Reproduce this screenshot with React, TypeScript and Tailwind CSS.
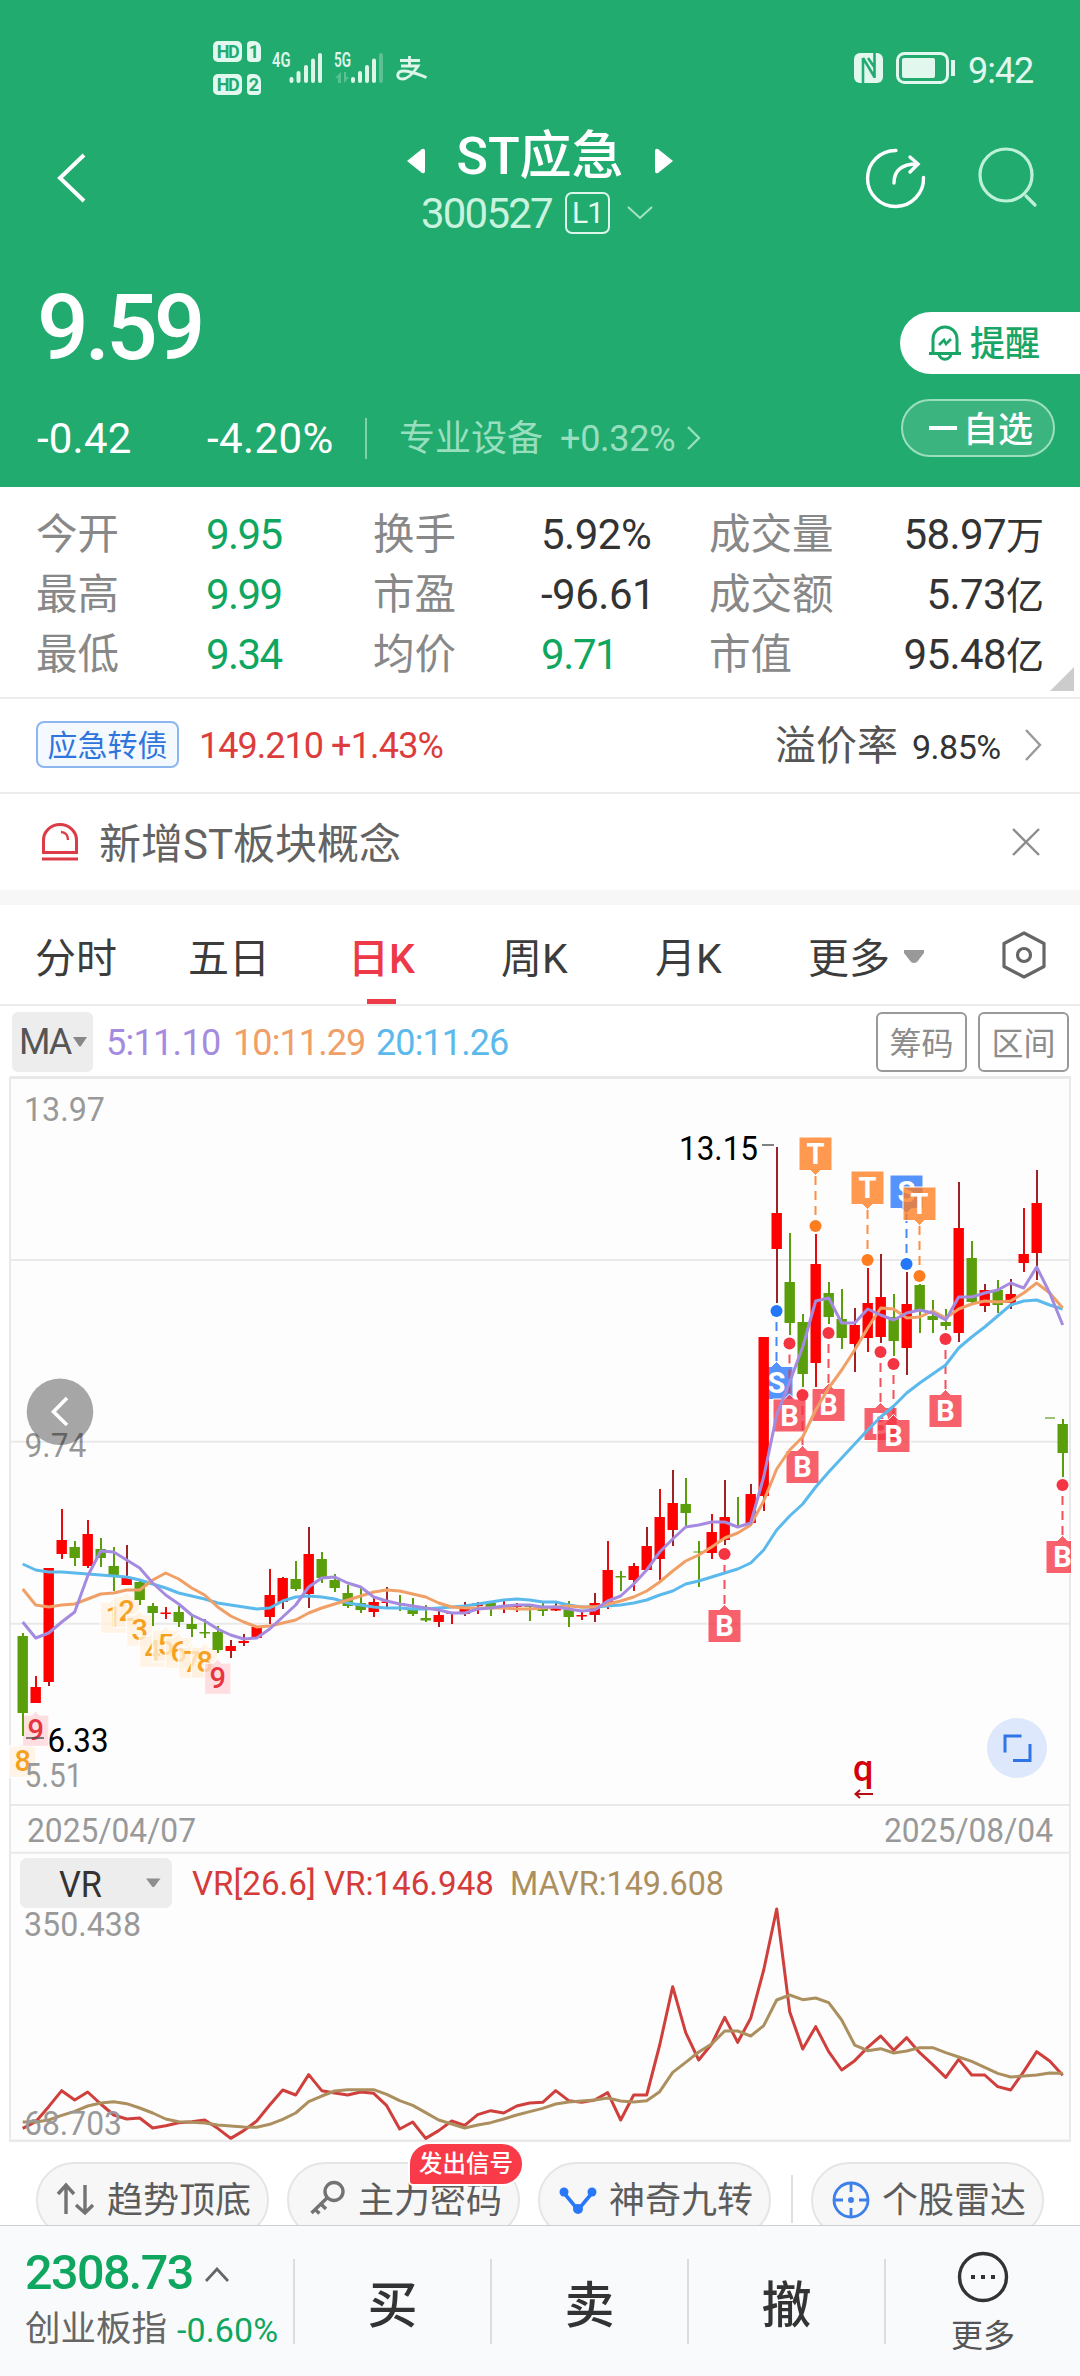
import type { ReactNode } from 'react';

type Candle = [number, number, number, number, string];

// high, body top, body bottom, low, kind (r = up, d = up with dark wick, g = down)
const candles: Candle[] = [
    [1633, 1636, 1713, 1736, 'g'], [1676, 1687, 1703, 1703, 'r'], [1568, 1568, 1682, 1686, 'd'], [1509, 1540, 1554, 1559, 'r'],
    [1541, 1547, 1558, 1566, 'g'], [1520, 1534, 1566, 1568, 'r'], [1538, 1549, 1558, 1567, 'g'], [1547, 1566, 1576, 1591, 'g'],
    [1545, 1578, 1585, 1585, 'd'], [1580, 1582, 1600, 1605, 'g'], [1603, 1606, 1613, 1626, 'g'], [1607, 1612.5, 1614, 1619, 'r'],
    [1606, 1612, 1622, 1627, 'g'], [1616, 1624, 1629, 1637, 'g'], [1619, 1632, 1633.5, 1638, 'g'], [1626, 1632, 1650, 1653, 'g'],
    [1640, 1646, 1651, 1658, 'd'], [1634, 1641, 1643, 1646, 'd'], [1627, 1627, 1638, 1638, 'r'], [1569, 1595, 1617, 1624, 'r'],
    [1577, 1578, 1602, 1609, 'd'], [1561, 1579, 1589, 1591, 'g'], [1527, 1554, 1594, 1608, 'd'], [1552, 1559, 1578, 1583, 'g'],
    [1574, 1580, 1588, 1592, 'g'], [1585, 1593, 1606, 1608, 'g'], [1587, 1603, 1610, 1613, 'g'], [1598, 1602, 1612, 1617, 'r'],
    [1587, 1601.5, 1603, 1609, 'd'], [1595, 1603, 1604, 1611, 'g'], [1598, 1608, 1614, 1616, 'g'], [1605, 1618, 1620.5, 1622, 'g'],
    [1610, 1615, 1622, 1627, 'd'], [1613, 1613, 1614, 1624, 'r'], [1602, 1608, 1614, 1616, 'd'], [1602, 1603, 1606, 1614, 'r'],
    [1601, 1603, 1608, 1616, 'g'], [1601, 1607, 1608, 1613, 'r'], [1603, 1606, 1607, 1612, 'r'], [1604, 1606, 1607, 1621, 'g'],
    [1603, 1609, 1611, 1616, 'g'], [1603, 1608, 1610.5, 1611, 'd'], [1601, 1610, 1617, 1627, 'g'], [1610, 1615, 1616.5, 1620, 'r'],
    [1593, 1603, 1615, 1622, 'd'], [1541, 1570, 1603, 1609, 'r'], [1571, 1576, 1577.5, 1591, 'g'], [1563, 1566, 1580, 1591, 'r'],
    [1527, 1546, 1570, 1571, 'd'], [1489, 1517, 1559, 1580, 'r'], [1470, 1503, 1530, 1546, 'd'], [1478, 1504, 1513, 1526, 'g'],
    [1541, 1551.5, 1552.5, 1587, 'g'], [1514, 1532, 1553, 1559, 'r'], [1480, 1517, 1540, 1545, 'd'], [1497, 1526, 1527, 1527, 'g'],
    [1484, 1494, 1523, 1523, 'd'], [1337, 1337, 1496, 1511, 'r'], [1147, 1213, 1249, 1303, 'd'], [1233, 1282, 1323, 1335, 'g'],
    [1314, 1322, 1374, 1387, 'g'], [1234, 1264, 1363, 1387, 'r'], [1282, 1293, 1317, 1324, 'g'], [1289, 1319, 1338, 1349, 'g'],
    [1308, 1325, 1344, 1372, 'd'], [1268, 1303, 1338, 1352, 'r'], [1254, 1297, 1337, 1343, 'd'], [1294, 1317, 1341, 1356, 'g'],
    [1272, 1304, 1348, 1375, 'd'], [1284, 1285, 1310, 1333, 'g'], [1300, 1316, 1320, 1333, 'g'], [1309, 1322, 1326, 1330, 'g'],
    [1182, 1228, 1333, 1342, 'd'], [1241, 1258, 1302, 1303, 'g'], [1284, 1290, 1306, 1312, 'd'], [1280, 1290, 1305, 1313, 'g'],
    [1279, 1294, 1303, 1309, 'd'], [1208, 1254, 1263, 1272, 'r'], [1170, 1203, 1253, 1280, 'd'], [1418, 1418, 1418, 1418, 'n'],
    [1419, 1424, 1453, 1477, 'g'],
];

const ma5 = [1622, 1638, 1633, 1622, 1612, 1576, 1551, 1552, 1560, 1568, 1583, 1595, 1604, 1615, 1621, 1629, 1635, 1639, 1638, 1629, 1617, 1605, 1587, 1578, 1577, 1583, 1587, 1597, 1601, 1604, 1606, 1608, 1610, 1613, 1613, 1609, 1608, 1606, 1605, 1605, 1607, 1607, 1609, 1611, 1610, 1601, 1596, 1584, 1570, 1552, 1539, 1527, 1525, 1522, 1522, 1527, 1523, 1477, 1415, 1382, 1347, 1301, 1298, 1323, 1323, 1309, 1315, 1320, 1313, 1310, 1313, 1320, 1297, 1297, 1293, 1290, 1283, 1288, 1267, 1293, 1325];
const ma10 = [1589, 1605, 1607, 1605, 1604, 1599, 1594, 1593, 1590, 1590, 1580, 1573, 1579, 1588, 1595, 1607, 1616, 1622, 1627, 1626, 1623, 1620, 1613, 1608, 1604, 1600, 1596, 1592, 1590, 1591, 1594, 1597, 1603, 1607, 1608, 1608, 1608, 1608, 1609, 1609, 1608, 1607, 1606, 1607, 1607, 1604, 1601, 1597, 1591, 1582, 1571, 1561, 1555, 1547, 1538, 1533, 1525, 1501, 1469, 1450, 1437, 1410, 1388, 1370, 1350, 1328, 1308, 1309, 1318, 1317, 1311, 1318, 1309, 1304, 1301, 1302, 1301, 1293, 1283, 1293, 1308];
const ma20 = [1564, 1570, 1572, 1572, 1573, 1574, 1575, 1576, 1577, 1580, 1584, 1588, 1593, 1596, 1599, 1603, 1605, 1607, 1609, 1608, 1601, 1597, 1596, 1597, 1599, 1603, 1605, 1607, 1608, 1608, 1609, 1609, 1608, 1607, 1606, 1604, 1602, 1600, 1599, 1600, 1602, 1602, 1605, 1607, 1607, 1606, 1605, 1603, 1600, 1595, 1591, 1584, 1581, 1577, 1573, 1569, 1563, 1550, 1530, 1516, 1504, 1487, 1472, 1458, 1444, 1430, 1417, 1406, 1393, 1383, 1374, 1365, 1348, 1337, 1327, 1316, 1305, 1301, 1300, 1305, 1309];

const vr = [985, 965, 920, 872, 900, 876, 912, 945, 957, 954, 984, 977, 968, 965, 960, 985, 1015, 992, 963, 915, 870, 885, 824, 872, 879, 885, 876, 880, 917, 987, 966, 1015, 992, 963, 976, 944, 932, 939, 918, 909, 907, 872, 902, 907, 900, 878, 960, 885, 885, 735, 560, 698, 780, 732, 652, 727, 655, 510, 327, 635, 747, 680, 755, 810, 782, 742, 708, 751, 713, 758, 794, 832, 778, 825, 825, 860, 870, 815, 755, 783, 826];
const mavr = [966, 966, 960, 946, 934, 918, 909, 905, 911, 924, 939, 957, 965, 967, 969, 975, 978, 981, 982, 973, 958, 939, 905, 888, 873, 869, 869, 869, 883, 902, 916, 938, 960, 972, 984, 975, 968, 957, 945, 935, 925, 912, 906, 903, 900, 894, 903, 906, 902, 875, 817, 787, 756, 732, 693, 693, 708, 677, 600, 585, 599, 594, 608, 660, 735, 752, 746, 759, 753, 743, 743, 758, 771, 784, 802, 820, 831, 828, 825, 819, 820];

// letter, candle index, dot y, direction of the flag
const flags: [string, number, number, 'up' | 'down'][] = [
    ['S', 58, 1311, 'up'], ['B', 59, 1343.5, 'up'], ['B', 60, 1395, 'up'], ['B', 62, 1333, 'up'],
    ['B', 66, 1352, 'up'], ['B', 67, 1364, 'up'], ['B', 71, 1339, 'up'], ['B', 54, 1554, 'up'],
    ['B', 80, 1485, 'up'], ['T', 61, 1226, 'down'], ['T', 65, 1260, 'down'], ['S', 68, 1264, 'down'],
    ['T', 69, 1276, 'down'],
];

// nine-turn counters: label, candle index, box top
const turns: [string, number, number][] = [
    ['1', 7, 1602], ['2', 8, 1596], ['3', 9, 1615], ['4', 10, 1636], ['5', 11, 1630], ['6', 12, 1637],
    ['7', 13, 1647], ['8', 14, 1647], ['9', 15, 1663], ['8', 0, 1746], ['9', 1, 1715],
];

const flagColors: Record<string, string> = { S: '#2476fb', B: '#f43442', T: '#ff7c1f' };

const cx = (i: number) => 22.7 + i * 13;
const line = (ys: number[]) => ys.map((y, i) => `${cx(i)},${y}`).join(' ');

const Label = ({ x, y, w, children, fill = '#999', size = 34 }: { x: number; y: number; w: number; children: string; fill?: string; size?: number }) => (
    <text x={x} y={y} fontSize={size} fill={fill} textLength={w} lengthAdjust="spacingAndGlyphs">{children}</text>
);

const Flag = ({ kind, i, dot, dir }: { kind: string; i: number; dot: number; dir: 'up' | 'down' }) => {
    const x = cx(i) - 0.2;
    const top = dir === 'up' ? dot + 55.5 : dot - 89;
    const color = flagColors[kind];
    const tip = dir === 'up'
        ? `M${x - 16.5} ${top}h11.5l5-5 5 5h11.5v33h-33z`
        : `M${x - 16.5} ${top}h33v33.5h-11.5l-5 5-5-5h-11.5z`;
    return (
        <g>
            <path d={dir === 'up' ? `M${x} ${dot + 11}V${top - 5}` : `M${x} ${dot - 11}V${top + 39}`} stroke={color} strokeWidth="2" strokeDasharray="9 6" opacity="0.85" />
            <path d={tip} fill={color} fillOpacity="0.78" stroke="#fff" strokeWidth="1" />
            <text x={x} y={top + 26.5} fontSize="29" fontWeight="700" fill="#fff" textAnchor="middle">{kind}</text>
            <circle cx={x} cy={dot} r="6" fill={color} />
        </g>
    );
};

const KChart = () => (
    <svg width="1080" height="1066" viewBox="0 1076 1080 1066" className="block">
        <rect x="10" y="1076" width="1061" height="1067" fill="#fdfdfd" />
        <g stroke="#e9e9e9" strokeWidth="2" fill="none">
            <path d="M10 1077.5H1071" strokeWidth="3" />
            <path d="M10 1260H1070M10 1441.7H1070M10 1623.7H1070M10 1805H1070M10 1852.7H1070" />
            <path d="M10 1077V2142M1070 1077V2142" />
            <path d="M9 2141H1071" strokeWidth="3" />
        </g>
        <circle cx="60" cy="1411.7" r="33.3" fill="#a6a6a6" />
        <path d="M67 1398L53.5 1411.7 67 1425" fill="none" stroke="#fff" strokeWidth="3.6" />

        <g clipPath="url(#plot)">
            {flags.map(([kind, i, dot, dir]) => (
                <Flag key={`${kind}${i}`} kind={kind} i={i} dot={dot} dir={dir} />
            ))}
        </g>
        <clipPath id="plot"><rect x="10" y="1077" width="1061" height="728" /></clipPath>

        {turns.map(([n, i, top]) => (
            <g key={`${n}-${i}`}>
                <path d={`M${cx(i) - 13.3} ${top}h9.3l4-4.5 4 4.5h9.3v31.5h-26.6z`} fill={n === '9' ? '#ffd3d8' : '#fff0dd'} fillOpacity="0.75" stroke="#fff" strokeOpacity="0.8" strokeWidth="1.5" />
                <text x={cx(i)} y={top + 24.5} fontSize="29" fontWeight="500" fill={n === '9' ? '#e8343f' : '#f5a020'} textAnchor="middle">{n}</text>
            </g>
        ))}

        {candles.map(([hi, top, bottom, lo, kind], i) => {
            if (kind === 'n') return <path key={i} d="M1045 1418h10" stroke="#9cc478" strokeWidth="2" />;
            const body = kind === 'g' ? '#5a9e0c' : '#fe0000';
            const wick = kind === 'g' ? '#5a9e0c' : kind === 'd' ? '#9c2426' : '#e30b0d';
            return (
                <g key={i}>
                    <rect x={cx(i) - 0.7} y={hi} width="2" height={lo - hi} fill={wick} />
                    <rect x={cx(i) - 5.2} y={top} width="10.4" height={Math.max(bottom - top, 1)} fill={body} />
                </g>
            );
        })}

        <g fill="none" strokeWidth="3" strokeLinejoin="round">
            <polyline points={line(ma20)} stroke="#5bb9ec" />
            <polyline points={line(ma10)} stroke="#f0a066" />
            <polyline points={line(ma5)} stroke="#a58be0" />
            <polyline points={line(vr.map((v) => 1800 + v / 3))} stroke="#cf3f3c" />
            <polyline points={line(mavr.map((v) => 1800 + v / 3))} stroke="#ac8f5e" />
        </g>

        <Label x={24} y={1121} w={81}>13.97</Label>
        <Label x={24.5} y={1457} w={62} fill="#0000006a">9.74</Label>
        <Label x={24.5} y={1787} w={58}>5.51</Label>
        <Label x={47.5} y={1752} w={61} fill="#000">6.33</Label>
        <Label x={679} y={1159.5} w={79} fill="#000">13.15</Label>
        <path d="M26 1738h18M762 1145h12" stroke="#555" strokeWidth="1.6" />

        <text x="853" y="1781" fontSize="36" fontWeight="500" fill="#d4000c">q</text>
        <path d="M873 1794h-17m4-4l-4.5 4 4.5 4" fill="none" stroke="#b80d10" strokeWidth="2" />

        <circle cx="1017" cy="1748" r="30" fill="#dee8fc" />
        <path d="M1005 1752.500V1736h16.500M1030 1744v16.500h-17" fill="none" stroke="#2f75e8" strokeWidth="3" />

        <Label x={27} y={1842} w={169}>2025/04/07</Label>
        <Label x={884} y={1842} w={169}>2025/08/04</Label>
        <rect x="20" y="1858" width="152" height="50" rx="7" fill="#ededed" />
        <Label x={59} y={1897} w={43} fill="#333" size={36}>VR</Label>
        <path d="M146 1878.500h14.500l-6 8q-1.200 1-2.400 0z" fill="#8e8e8e" />
        <Label x={192} y={1895} w={302} fill="#d43b3a" size={33}>VR[26.6] VR:146.948</Label>
        <Label x={510} y={1895} w={214} fill="#ac8f5e" size={33}>MAVR:149.608</Label>
        <Label x={24} y={1936} w={117}>350.438</Label>
        <Label x={24} y={2135} w={98}>68.703</Label>
    </svg>
);

const StatusBar = () => (
    <div className="flex h-[110px] pt-[41px] pl-[213px]">
        <div className="flex flex-col gap-[12px]">
            {['1', '2'].map((n) => (
                <div key={n} className="flex gap-[5px] text-[18px] leading-[21px] font-bold text-[#22ab6f]">
                    <span className="h-[21px] w-[29px] rounded-[5px] bg-[#e2f8ee] text-center tracking-[-1.5px]">HD</span>
                    <span className="h-[21px] w-[14px] rounded-[4px] rounded-tr-[7px] bg-[#e2f8ee] text-center">{n}</span>
                </div>
            ))}
        </div>
        <svg width="170" height="46" viewBox="261 48 170 46" className="mt-[7px]" fill="#def5ea">
            <text x="272" y="67" fontSize="20" fontWeight="600" textLength="18.500" lengthAdjust="spacingAndGlyphs">4G</text>
            <text x="334" y="67" fontSize="20" fontWeight="600" textLength="17" lengthAdjust="spacingAndGlyphs">5G</text>
            <g strokeWidth="4" strokeLinecap="round" stroke="#def5ea">
                <path d="M291.500 79v2M298.500 73v8M306 67v14M313 60.500v20.500M320 55v26M353 79v2M360 73v8M367 67v14M374 60.500v20.500" />
                <path d="M381 55v26" opacity="0.3" />
            </g>
            <path d="M338 72v11h3v-11l-6 6h3zM344 72v11l5-6h-3v-5z" opacity="0.3" />
            <path d="M400 60.500h20M409.500 56v9.500M401 66h17c-4 6-9 13-15.500 13-7 0-6-8 1-8 8 0 14 3 23 6.500" fill="none" stroke="#def5ea" strokeWidth="2.800" />
        </svg>
        <svg width="104" height="46" viewBox="852 48 104 46" className="mt-[7px] ml-[421px]" fill="none" stroke="#e2f8ee">
            <rect x="854" y="53" width="29" height="30" rx="6" fill="#e2f8ee" stroke="none" />
            <path d="M863 83V58M863 58l11.500 19M874.500 78V53M868 58l7 10" stroke="#22ab6f" strokeWidth="2.600" />
            <rect x="897.500" y="53.500" width="50" height="29" rx="7" strokeWidth="3" />
            <rect x="902" y="58" width="33" height="20" rx="2" fill="#e2f8ee" stroke="none" />
            <path d="M953 60v16" strokeWidth="4" />
        </svg>
        <span className="mt-[12px] ml-[12px] text-[36px] leading-[36px] tracking-[-1.1px] text-[#e2f8ee]">9:42</span>
    </div>
);

const TitleBar = () => (
    <div className="flex h-[150px] items-start text-white">
        <svg width="40" height="60" viewBox="50 148 40 60" className="mt-[38px] ml-[50px]" fill="none" stroke="#fff" strokeWidth="4">
            <path d="M84 155L60 178l24 23" />
        </svg>
        <div className="ml-[317px] flex w-[266px] flex-col">
            <div className="mt-[17px] flex h-[56px] items-center justify-between">
                <svg width="18" height="26" viewBox="0 0 18 26" className="mt-[12px]" fill="#fff"><path d="M0 13L15 1q3-1 3 2v20q0 3-3 2z" /></svg>
                <span className="pt-[3px] text-[52px] leading-none font-medium">ST应急</span>
                <svg width="18" height="26" viewBox="0 0 18 26" className="mt-[12px]" fill="#fff"><path d="M18 13L3 1Q0 0 0 3v20q0 3 3 2z" /></svg>
            </div>
            <div className="flex h-[60px] items-center pl-[14px] text-[#c9f2df]">
                <span className="w-[133px] pt-[2px] text-[42px] leading-none tracking-[-1.8px]">300527</span>
                <span className="ml-[11px] flex h-[42px] w-[45px] items-center justify-center rounded-[7px] border-2 border-[#dcf7ea] text-[30px] leading-none tracking-[-1px] text-[#e6faf1]">L1</span>
                <svg width="26" height="16" viewBox="0 0 26 16" className="ml-[17px]" fill="none" stroke="#a5e3c7" strokeWidth="2"><path d="M1 2l12 11L25 2" /></svg>
            </div>
        </div>
        <svg width="190" height="70" viewBox="850 140 190 70" className="mt-[30px] ml-[178px]" fill="none">
            <path d="M895 150.500a28 28 0 1 0 27.500 27" stroke="#fff" strokeWidth="3.400" strokeLinecap="round" />
            <path d="M893 183c0-11 6-19 23-19M909 157l8 7-8 8" stroke="#fff" strokeWidth="3.400" strokeLinecap="round" />
            <circle cx="1005" cy="175" r="26" stroke="#bdf0d9" strokeWidth="3.200" />
            <path d="M1025 196l9 9" stroke="#bdf0d9" strokeWidth="3.200" strokeLinecap="round" />
        </svg>
    </div>
);

const PricePanel = () => (
    <div className="flex h-[227px] justify-between text-white">
        <div className="pl-[37px]">
            <div className="mt-[22px] h-[92px] text-[91px] leading-[92px] font-medium tracking-[-4px]">9.59</div>
            <div className="mt-[42px] flex h-[44px] items-center leading-none">
                <span className="w-[170px] pt-[2px] text-[42px] tracking-[0.2px]">-0.42</span>
                <span className="w-[158px] pt-[2px] text-[42px] tracking-[0.4px]">-4.20%</span>
                <span className="h-[41px] w-[2px] bg-[#7fd0ab]" />
                <span className="ml-[32px] pt-[2px] text-[36px] text-[#97dfbf]">专业设备</span>
                <span className="ml-[17px] w-[118px] pt-[2px] text-[36px] tracking-[-0.3px] text-[#97dfbf]">+0.32%</span>
                <svg width="16" height="26" viewBox="0 0 16 26" className="ml-[8px]" fill="none" stroke="#97dfbf" strokeWidth="2.400"><path d="M2 2l11 11L2 24" /></svg>
            </div>
        </div>
        <div className="w-[180px]">
            <div className="mt-[52px] flex h-[62px] items-center rounded-l-full bg-white pl-[28px] text-[#19a566]">
                <svg width="34" height="36" viewBox="0 0 34 36" fill="none" stroke="#19a566" strokeWidth="3">
                    <path d="M5 28V14a12 12 0 0 1 24 0v14M1 28.500h32M11 29c1 7 11 7 12 0" />
                    <path d="M11 20l5-5 2 4 5-5" strokeWidth="2.600" />
                </svg>
                <span className="ml-[8px] pt-[3px] text-[35px] leading-none font-medium">提醒</span>
            </div>
            <div className="mt-[25px] ml-px flex h-[58px] w-[154px] items-center rounded-full border-2 border-[#9adfc0] bg-[#3bb47f] pl-[26px]">
                <span className="h-[4px] w-[28px] bg-white" />
                <span className="ml-[6px] pt-[4px] text-[35px] leading-none font-medium">自选</span>
            </div>
        </div>
    </div>
);

const stats: [string, string, string, string, string, string, string][] = [
    ['今开', '9.95', '换手', '5.92%', '成交量', '58.97', '万'],
    ['最高', '9.99', '市盈', '-96.61', '成交额', '5.73', '亿'],
    ['最低', '9.34', '均价', '9.71', '市值', '95.48', '亿'],
];

const Stats = () => (
    <div className="relative h-[212px] border-b-2 border-[#ececec] pt-[18px] pr-[36px] pl-[36px]">
        {stats.map(([a, av, b, bv, c, cv, unit]) => (
            <div key={a} className="grid h-[60px] grid-cols-[170px_167px_168px_168px_140px_1fr] items-center text-[41.5px] leading-none text-[#888]">
                <span>{a}</span>
                <span className="text-[42px] tracking-[-1.6px] text-[#0fa75f]">{av}</span>
                <span>{b}</span>
                <span className={`text-[42px] ${b === '均价' ? 'tracking-[-1.4px] text-[#0fa75f]' : 'tracking-[-0.5px] text-[#333]'}`}>{bv}</span>
                <span>{c}</span>
                <span className="text-right whitespace-nowrap text-[#333]"><span className="text-[42px] tracking-[-0.6px]">{cv}</span><span className="text-[38px]">{unit}</span></span>
            </div>
        ))}
        <svg width="24" height="24" viewBox="0 0 24 24" className="absolute right-[6px] bottom-[6px]" fill="#ccc"><path d="M24 0v24H0z" /></svg>
    </div>
);

const BondRow = () => (
    <div className="flex h-[95px] items-center border-b-2 border-[#ececec] pt-px pl-[36px] leading-none">
        <span className="mb-[3px] flex h-[47px] w-[143px] items-center justify-center rounded-[8px] border-2 border-[#8db6f1] bg-[#f3f9ff] pt-[2px] text-[30px] text-[#2f75dc]">应急转债</span>
        <span className="ml-[20px] w-[132px] text-[36px] tracking-[-1px] text-[#dc3c3c]">149.210</span>
        <span className="text-[36px] tracking-[-0.8px] text-[#dc3c3c]">+1.43%</span>
        <span className="ml-auto text-[41px] text-[#555]">溢价率</span>
        <span className="ml-[14px] w-[90px] pt-px text-[34px] tracking-[-0.5px] text-[#333]">9.85%</span>
        <svg width="18" height="32" viewBox="0 0 18 32" className="mr-[38px] mb-[2px] ml-[22px]" fill="none" stroke="#999" strokeWidth="2.400"><path d="M2 1l14 15L2 31" /></svg>
    </div>
);

const NoticeRow = () => (
    <div className="flex h-[96px] items-center pl-[41px]">
        <svg width="38" height="38" viewBox="0 0 38 38" fill="none" stroke="#dc3c48" strokeWidth="3">
            <path d="M2.500 29.500V17a16.500 15.500 0 0 1 33 0v12.500zM1 36h36" />
            <path d="M20 9c4 0 7 3 7 8" strokeWidth="2.400" />
        </svg>
        <span className="ml-[20px] pt-[5px] text-[42px] leading-none text-[#636363]">新增ST板块概念</span>
        <svg width="28" height="28" viewBox="0 0 28 28" className="mr-[40px] ml-auto" fill="none" stroke="#8d8d8d" strokeWidth="2.400"><path d="M1 1l26 26M27 1L1 27" /></svg>
    </div>
);

const tabs: [string, string][] = [['分时', 'w-[153px]'], ['五日', 'w-[160px]'], ['日K', 'w-[153px]'], ['周K', 'w-[154px]'], ['月K', 'w-[153px]'], ['更多', 'w-[95px]']];

const Tabs = () => (
    <div className="flex h-[101px] items-center border-b-2 border-[#ececec] pl-[35px] leading-none">
        {tabs.map(([t, w]) => (
            <span key={t} className={`relative flex h-full items-center pt-[9px] text-[41px] ${w} ${t === '日K' ? 'font-medium text-[#ee3a48]' : 'text-[#3c3c3c]'}`}>
                {t}
                {t === '日K' && <span className="absolute bottom-0 left-[19px] h-[5px] w-[29px] bg-[#ee3a48]" />}
            </span>
        ))}
        <svg width="22" height="14" viewBox="0 0 22 14" className="mt-[4px]" fill="#999"><path d="M1 0h20v3l-7 9q-3 2-6 0L1 3z" /></svg>
        <svg width="48" height="50" viewBox="0 0 48 50" className="ml-[75px]" fill="none" stroke="#666" strokeWidth="3.200" strokeLinejoin="round">
            <path d="M24 3l20 10.500v23L24 47 4 36.500v-23z" />
            <circle cx="24" cy="25" r="6.500" />
        </svg>
    </div>
);

const MaRow = () => (
    <div className="flex h-[70px] items-center pt-[2px] pl-[12px] text-[36px] leading-none">
        <span className="flex h-[60px] w-[81px] items-center rounded-[6px] bg-[#ededed] pl-[7px] tracking-[-2px] text-[#555]">
            MA
            <svg width="14" height="10" viewBox="0 0 14 10" className="ml-[3px]" fill="#888"><path d="M0 0h14L8 9q-1 1-2 0z" /></svg>
        </span>
        <span className="ml-[13px] w-[127px] pt-[2px] tracking-[-0.7px] text-[#a58be0]">5:11.10</span>
        <span className="w-[143px] pt-[2px] tracking-[-0.9px] text-[#f0a066]">10:11.29</span>
        <span className="pt-[2px] tracking-[-0.9px] text-[#5bb9ec]">20:11.26</span>
        {['筹码', '区间'].map((t) => (
            <span key={t} className="mr-[11px] flex h-[60px] w-[91px] items-center justify-center rounded-[6px] border-2 border-[#999] pt-[3px] text-[32px] text-[#8c8c8c] nth-[5]:ml-auto">{t}</span>
        ))}
    </div>
);

const Pill = ({ icon, label, className = '' }: { icon: ReactNode; label: string; className?: string }) => (
    <div className={`flex h-[76px] w-[233px] shrink-0 items-center rounded-full border-2 border-[#e5e5e5] bg-[#f7f7f7] pl-[18px] text-[36px] leading-none text-[#5c5c5c] ${className}`}>
        <svg width="40" height="40" viewBox="0 0 40 40" fill="none">{icon}</svg>
        <span className="ml-[11px] pt-px whitespace-nowrap">{label}</span>
    </div>
);

const Tools = () => (
    <div className="relative flex h-[83px] overflow-hidden pt-[20px] pl-[36px]">
        <Pill label="趋势顶底" icon={<path d="M10 34V6M2 14l8-9 8 9M29 5v28M20 25l9 8 8-8" stroke="#737373" strokeWidth="3.400" />} />
        <Pill
            label="主力密码"
            className="ml-[18px]"
            icon={<g stroke="#737373" strokeWidth="3.400"><circle cx="27" cy="11.500" r="9" /><path d="M20 18L4.500 33M7.500 29l5 4.500M14 24l5 5" /></g>}
        />
        <Pill
            label="神奇九转"
            className="ml-[18px]"
            icon={<g fill="#2878f8"><path d="M6 13l14 17 14-17" fill="none" stroke="#2878f8" strokeWidth="3.600" /><circle cx="6" cy="12" r="4.500" /><circle cx="34" cy="12" r="4.500" /><circle cx="20" cy="29" r="5" /></g>}
        />
        <span className="mt-[13px] ml-[20px] h-[48px] w-[2px] shrink-0 bg-[#e0e0e0]" />
        <Pill
            label="个股雷达"
            className="ml-[18px]"
            icon={<g stroke="#3d80ea" strokeWidth="2.800"><circle cx="20" cy="20" r="17" /><path d="M20 3v9M20 28v9M3 20h9M28 20h9" /><circle cx="20" cy="20" r="3" fill="#3d80ea" stroke="none" /></g>}
        />
        <span className="absolute top-0 left-[408px] flex h-[44px] w-[116px] items-center justify-center rounded-[22px] rounded-bl-[5px] border-2 border-white bg-[#f93a48] pt-[2px] text-[23.5px] leading-none font-medium text-white">发出信号</span>
    </div>
);

const BottomBar = () => (
    <div className="flex h-[151px] items-start border-t border-[#cfcfcf] bg-[#f9fafc] leading-none text-[#333]">
        <div className="w-[293px] pl-[25px] whitespace-nowrap">
            <div className="mt-[22px] flex h-[50px] items-center">
                <span className="w-[171px] text-[48.5px] font-medium tracking-[-1.6px] text-[#0fa75f]">2308.73</span>
                <svg width="24" height="15" viewBox="0 0 24 15" className="mt-[2px] ml-[9px]" fill="none" stroke="#666" strokeWidth="2.800"><path d="M1 14L12 2l11 12" /></svg>
            </div>
            <div className="mt-[14px] flex h-[36px] items-center text-[35.5px] text-[#666]">
                创业板指
                <span className="ml-[10px] text-[34px] tracking-[0.1px] text-[#0fa75f]">-0.60%</span>
            </div>
        </div>
        {['买', '卖', '撤'].map((t) => (
            <div key={t} className="mt-[33px] flex h-[85px] w-[197px] items-center justify-center border-l-2 border-[#dcdcde] pt-[8px] text-[50px] font-medium">{t}</div>
        ))}
        <div className="mt-[33px] h-[85px] flex-1 border-l-2 border-[#dcdcde]">
            <div className="flex flex-col items-center">
                <svg width="52" height="52" viewBox="0 0 52 52" className="-mt-[8px]" fill="none" stroke="#333" strokeWidth="3.400">
                    <circle cx="26" cy="26" r="23.500" />
                    <path d="M14 26h4M24 26h4M34 26h4" strokeWidth="4" />
                </svg>
                <span className="mt-[17px] text-[32px] text-[#555]">更多</span>
            </div>
        </div>
    </div>
);

export default function App() {
    return (
        <div className="h-[2376px] w-[1080px] overflow-hidden bg-white font-[Roboto,'Noto_Sans_CJK_SC',sans-serif]">
            <header className="h-[487px] bg-[#22ab6f]">
                <StatusBar />
                <TitleBar />
                <PricePanel />
            </header>
            <Stats />
            <BondRow />
            <NoticeRow />
            <div className="h-[15px] bg-[#f7f7f7]" />
            <Tabs />
            <MaRow />
            <KChart />
            <Tools />
            <BottomBar />
        </div>
    );
}
